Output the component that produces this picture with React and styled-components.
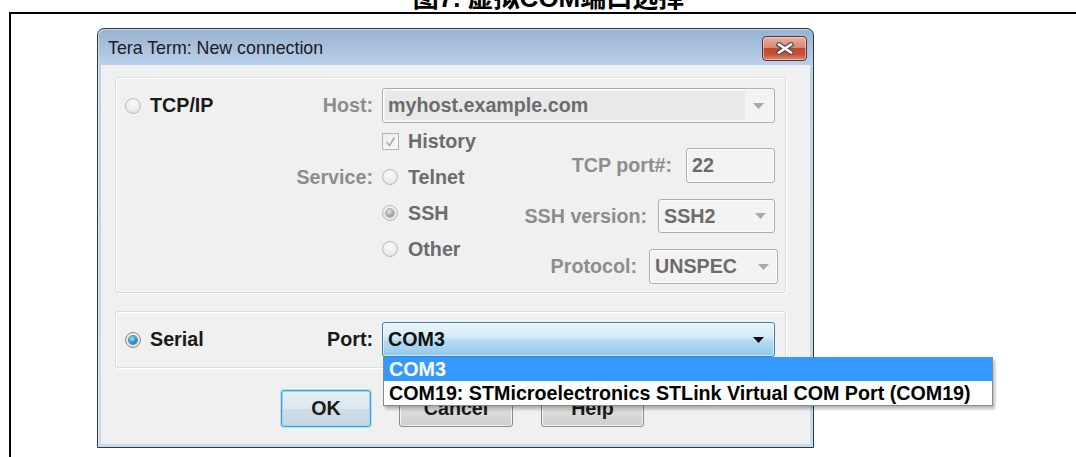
import React from 'react';
import styled, { createGlobalStyle } from 'styled-components';

const GlobalStyle = createGlobalStyle`
  html, body { margin: 0; padding: 0; background: #ffffff; }
  body {
    width: 1076px;
    height: 457px;
    overflow: hidden;
    font-family: "Liberation Sans", Arial, sans-serif;
  }
`;

const FONT = `"Liberation Sans", Arial, sans-serif`;

const Page = styled.div`
  display: flex;
  flex-direction: column;
  width: 1076px;
  height: 457px;
  overflow: hidden;
`;

/* Document caption above the framed figure; only its lower part shows */
const Caption = styled.div`
  height: 12px;
  padding-left: 21px;
  text-align: center;
`;

const CaptionText = styled.div`
  margin-top: -15px;
  line-height: 26px;
  font-size: 26px;
  font-weight: 700;
  color: #000;
  white-space: nowrap;
  font-family: "Liberation Sans", "Noto Sans CJK SC", sans-serif;
`;

const Figure = styled.div`
  flex: 1;
  margin-left: 9px;
  border-top: 2px solid #000;
  border-left: 2px solid #000;
  padding: 14px 0 0 86px;
`;

/* Windows 7 style dialog window */
const Dialog = styled.div`
  box-sizing: border-box;
  width: 717px;
  height: 420px;
  border: 1px solid #2f3741;
  border-radius: 7px 7px 0 0;
  background: linear-gradient(#97b1cf, #bad1ea 36px, #c6daee);
  padding: 0 3px 3px;
  display: flex;
  flex-direction: column;
  box-shadow: inset 1px 1px 0 rgba(255, 255, 255, 0.45);
`;

const TitleBar = styled.div`
  height: 36px;
  flex: none;
  display: flex;
  align-items: center;
  justify-content: space-between;
  padding: 0 3px 0 7px;
`;

const TitleText = styled.span`
  margin-top: 3px;
  font: 400 17.8px ${FONT};
  color: #1c1a22;
`;

const CloseButton = styled.div`
  box-sizing: border-box;
  width: 45px;
  height: 25px;
  margin-top: 2px;
  border: 1px solid #4f3a44;
  border-radius: 4px;
  background: linear-gradient(#eab0a2 0%, #da8a78 45%, #c4442c 50%, #c9503a 75%, #e1866c 100%);
  box-shadow: inset 0 0 0 1px rgba(255, 220, 210, 0.55);
  display: flex;
  align-items: center;
  justify-content: center;
`;

const Client = styled.div`
  flex: 1;
  background: #f0f0f0;
  padding: 12px 24px 0 14px;
  display: flex;
  flex-direction: column;
  gap: 18px;
`;

const Group = styled.div`
  box-sizing: border-box;
  width: 671px;
  height: ${(p) => p.$h}px;
  border: 1px solid #d5dfe5;
  border-radius: 3px;
  box-shadow: inset 1px 1px 0 #ffffff, 1px 1px 0 #ffffff;
  padding: 10px 0 0 9px;
  display: grid;
  grid-template-columns: 248px 393px;
  column-gap: 9px;
  align-content: start;
`;

const LeadCell = styled.div`
  height: 35px;
  display: flex;
  align-items: center;
  justify-content: space-between;
`;

const ServiceCell = styled.div`
  height: 36px;
  margin-top: 36px;
  display: flex;
  align-items: center;
  justify-content: flex-end;
`;

const Text = styled.span`
  font: 700 19.7px ${FONT};
  color: ${(p) => p.$color || '#1a1a1a'};
  white-space: nowrap;
`;

const Choice = styled.div`
  display: flex;
  align-items: center;
  gap: ${(p) => p.$gap || 10}px;
  height: ${(p) => p.$h || 36}px;
`;

const Radio = styled.span`
  position: relative;
  flex: none;
  box-sizing: border-box;
  width: 16px;
  height: 16px;
  border-radius: 50%;
  border: 1px solid ${(p) => (p.$enabled ? '#8a8c8e' : '#bababa')};
  background: ${(p) =>
    p.$enabled
      ? 'radial-gradient(circle at 50% 35%, #ffffff 0%, #e4e4e4 60%, #cfcfcf 100%)'
      : 'radial-gradient(circle at 50% 35%, #fbfbfb 0%, #ebebeb 60%, #dcdcdc 100%)'};

  &::after {
    content: '';
    display: ${(p) => (p.$checked ? 'block' : 'none')};
    position: absolute;
    left: 3px;
    top: 3px;
    width: 8px;
    height: 8px;
    border-radius: 50%;
    background: ${(p) =>
      p.$enabled
        ? 'radial-gradient(circle at 40% 35%, #a8e6ff 0%, #3aa3e4 40%, #0d4f92 100%)'
        : 'radial-gradient(circle at 40% 35%, #e4e4e4 0%, #a9a9a9 55%, #878787 100%)'};
    box-shadow: 0 0 0 1px ${(p) => (p.$enabled ? 'rgba(20,60,110,0.6)' : 'rgba(120,120,120,0.5)')};
  }
`;

const CheckBox = styled.span`
  flex: none;
  box-sizing: border-box;
  width: 17px;
  height: 17px;
  border: 1px solid #b4b4b4;
  background: linear-gradient(135deg, #ececec, #fafafa);
  display: flex;
  align-items: center;
  justify-content: center;
`;

const Detail = styled.div`
  display: flex;
  justify-content: space-between;
`;

const Options = styled.div`
  display: flex;
  flex-direction: column;
`;

const Controls = styled.div`
  display: flex;
  flex-direction: column;
  align-items: flex-end;
  gap: 16px;
  padding-top: 25px;
`;

const FieldRow = styled.div`
  display: flex;
  align-items: center;
  gap: ${(p) => p.$gap}px;
  margin-right: ${(p) => p.$overhang || 0}px;
`;

const Combo = styled.div`
  position: relative;
  box-sizing: border-box;
  width: ${(p) => p.$w}px;
  height: ${(p) => p.$h || 35}px;
  border: 1px solid ${(p) => (p.$active ? '#3c7fb1' : '#adadad')};
  border-radius: 3px;
  background: ${(p) =>
    p.$active
      ? 'linear-gradient(#eaf5fc 0%, #d6ecf9 40%, #b3dbf3 55%, #93c9ea 100%)'
      : '#f3f3f3'};
  box-shadow: inset 0 0 0 1px ${(p) => (p.$active ? 'rgba(255,255,255,0.5)' : '#fbfbfb')};
  padding: 2px;
  display: flex;
`;

const ComboValue = styled.div`
  flex: 1;
  display: flex;
  align-items: center;
  padding-left: 3px;
  background: ${(p) => p.$bg || 'transparent'};
  overflow: hidden;
`;

const ComboArrow = styled.div`
  width: ${(p) => p.$w || 24}px;
  flex: none;
  display: flex;
  align-items: center;
  justify-content: center;
`;

const DropList = styled.div`
  position: absolute;
  z-index: 5;
  left: 0;
  top: calc(100% + 1px);
  box-sizing: border-box;
  width: 610px;
  border: 1px solid #8a8a8a;
  border-top: none;
  background: #ffffff;
  box-shadow: 2px 3px 3px rgba(0, 0, 0, 0.28);
`;

const DropItem = styled.div`
  height: 24px;
  display: flex;
  align-items: center;
  padding-left: 5px;
  background: ${(p) => (p.$selected ? '#3399ff' : '#ffffff')};
`;

const ButtonRow = styled.div`
  display: flex;
  gap: 28px;
  padding-left: 166px;
  margin-top: 4px;
`;

const Button = styled.div`
  box-sizing: border-box;
  width: ${(p) => p.$w}px;
  height: 37px;
  border-radius: 3px;
  border: 1px solid ${(p) => (p.$focused ? '#3a9fe0' : '#8c8c8c')};
  background: ${(p) =>
    p.$focused
      ? 'linear-gradient(#e6eef4, #dde7ef 50%, #cfdde8 52%, #c6d6e3)'
      : 'linear-gradient(#f2f2f2, #ebebeb 50%, #dddddd 52%, #cfcfcf)'};
  box-shadow: ${(p) =>
    p.$focused
      ? 'inset 0 0 0 1px #9fd4f5, 0 0 0 1px rgba(90,180,235,0.35)'
      : 'inset 0 0 0 1px rgba(255,255,255,0.7)'};
  display: flex;
  align-items: center;
  justify-content: center;
`;

const Arrow = ({ color }) => (
  <svg width="11" height="6" viewBox="0 0 11 6">
    <path d="M0 0h11L5.5 6z" fill={color} />
  </svg>
);

const CloseGlyph = () => (
  <svg width="20" height="13" viewBox="0 0 20 13">
    <path d="M4 2.5L16 10.5M16 2.5L4 10.5" stroke="#4b4b52" strokeWidth="5" strokeLinecap="square" />
    <path d="M4 2.5L16 10.5M16 2.5L4 10.5" stroke="#ffffff" strokeWidth="2.6" strokeLinecap="square" />
  </svg>
);

const Tick = () => (
  <svg width="13" height="13" viewBox="0 0 13 13">
    <path d="M2.5 7l3 3.5L10.5 2.5" stroke="#a8a8a8" strokeWidth="1.6" fill="none" />
  </svg>
);

const DIM_LABEL = '#8d8d8d';
const DIM_VALUE = '#6c6c6c';

export default function App() {
  return (
    <>
      <GlobalStyle />
      <Page>
        <Caption>
          <CaptionText>图7. 虚拟COM端口选择</CaptionText>
        </Caption>
        <Figure>
          <Dialog>
            <TitleBar>
              <TitleText>Tera Term: New connection</TitleText>
              <CloseButton>
                <CloseGlyph />
              </CloseButton>
            </TitleBar>
            <Client>
              <Group $h={216}>
                <LeadCell>
                  <Choice $gap={9} $h={35}>
                    <Radio />
                    <Text>TCP/IP</Text>
                  </Choice>
                  <Text $color={DIM_LABEL}>Host:</Text>
                </LeadCell>
                <Combo $w={393}>
                  <ComboValue $bg="#e9e9e9">
                    <Text $color={DIM_VALUE}>myhost.example.com</Text>
                  </ComboValue>
                  <ComboArrow $w={27}>
                    <Arrow color="#a9a9a9" />
                  </ComboArrow>
                </Combo>

                <ServiceCell>
                  <Text $color={DIM_LABEL}>Service:</Text>
                </ServiceCell>
                <Detail>
                  <Options>
                    <Choice $gap={9}>
                      <CheckBox>
                        <Tick />
                      </CheckBox>
                      <Text $color={DIM_VALUE}>History</Text>
                    </Choice>
                    <Choice>
                      <Radio />
                      <Text $color={DIM_VALUE}>Telnet</Text>
                    </Choice>
                    <Choice>
                      <Radio $checked />
                      <Text $color={DIM_VALUE}>SSH</Text>
                    </Choice>
                    <Choice>
                      <Radio />
                      <Text $color={DIM_VALUE}>Other</Text>
                    </Choice>
                  </Options>
                  <Controls>
                    <FieldRow $gap={14}>
                      <Text $color={DIM_LABEL}>TCP port#:</Text>
                      <Combo $w={89}>
                        <ComboValue>
                          <Text $color={DIM_VALUE}>22</Text>
                        </ComboValue>
                      </Combo>
                    </FieldRow>
                    <FieldRow $gap={11}>
                      <Text $color={DIM_LABEL}>SSH version:</Text>
                      <Combo $w={117} $h={34}>
                        <ComboValue>
                          <Text $color={DIM_VALUE}>SSH2</Text>
                        </ComboValue>
                        <ComboArrow>
                          <Arrow color="#a9a9a9" />
                        </ComboArrow>
                      </Combo>
                    </FieldRow>
                    <FieldRow $gap={12} $overhang={-3}>
                      <Text $color={DIM_LABEL}>Protocol:</Text>
                      <Combo $w={129}>
                        <ComboValue>
                          <Text $color={DIM_VALUE}>UNSPEC</Text>
                        </ComboValue>
                        <ComboArrow>
                          <Arrow color="#a9a9a9" />
                        </ComboArrow>
                      </Combo>
                    </FieldRow>
                  </Controls>
                </Detail>
              </Group>

              <Group $h={57}>
                <LeadCell>
                  <Choice $gap={9} $h={35}>
                    <Radio $enabled $checked />
                    <Text>Serial</Text>
                  </Choice>
                  <Text>Port:</Text>
                </LeadCell>
                <Combo $w={393} $active>
                  <ComboValue>
                    <Text $color="#111">COM3</Text>
                  </ComboValue>
                  <ComboArrow $w={27}>
                    <Arrow color="#111" />
                  </ComboArrow>
                  <DropList>
                    <DropItem $selected>
                      <Text $color="#ffffff">COM3</Text>
                    </DropItem>
                    <DropItem>
                      <Text $color="#000">COM19: STMicroelectronics STLink Virtual COM Port (COM19)</Text>
                    </DropItem>
                  </DropList>
                </Combo>
              </Group>

              <ButtonRow>
                <Button $w={90} $focused>
                  <Text>OK</Text>
                </Button>
                <Button $w={114}>
                  <Text>Cancel</Text>
                </Button>
                <Button $w={103}>
                  <Text>Help</Text>
                </Button>
              </ButtonRow>
            </Client>
          </Dialog>
        </Figure>
      </Page>
    </>
  );
}
